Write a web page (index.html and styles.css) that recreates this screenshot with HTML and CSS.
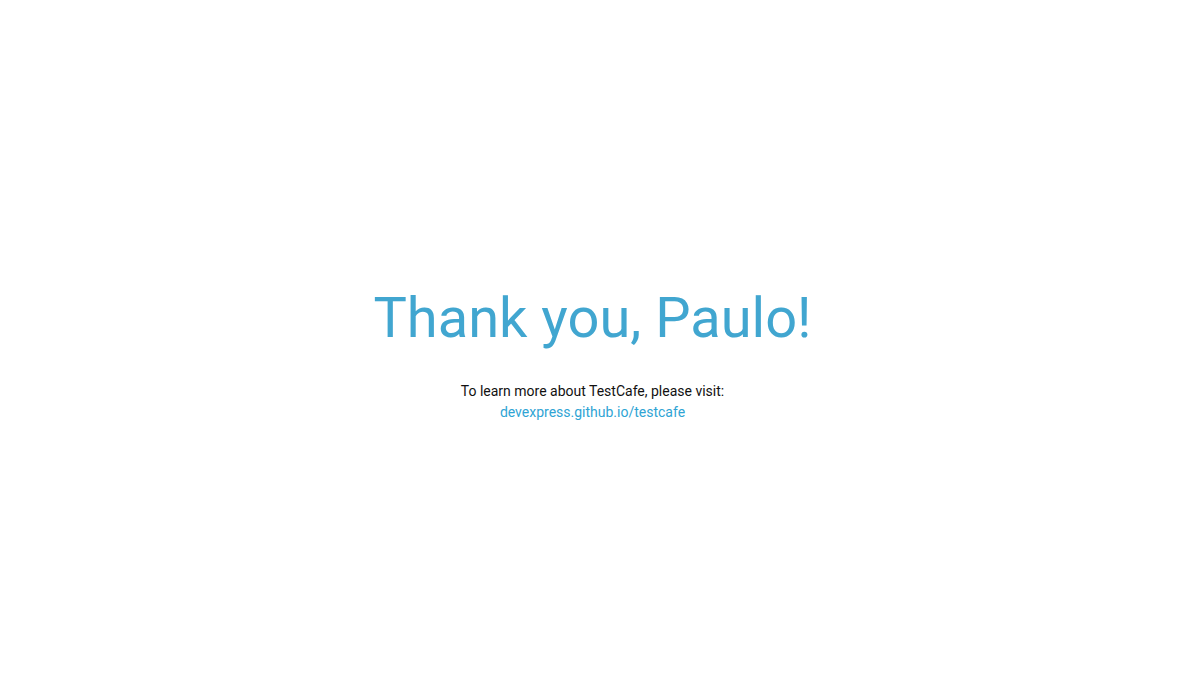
FILE: index.html
```html
<!DOCTYPE html>
<html>
<head>
<meta charset="utf-8">
<link rel="stylesheet" href="styles.css">
</head>
<body>
<main class="page">
  <div class="content">
    <h1 class="title">Thank you, Paulo!</h1>
    <p class="info">To learn more about TestCafe, please visit:<br><a class="link" href="#">devexpress.github.io/testcafe</a></p>
  </div>
</main>
</body>
</html>
```
FILE: styles.css
```css
html, body {
  margin: 0;
  padding: 0;
  height: 100%;
  background: #ffffff;
}
.page {
  box-sizing: border-box;
  height: 100%;
  padding-top: 19px;
  display: flex;
  align-items: center;
  justify-content: center;
  font-family: Roboto, "Liberation Sans", sans-serif;
}
.content {
  text-align: center;
}
.title {
  margin: 0;
  font-size: 56px;
  font-weight: 400;
  line-height: 1.2;
  color: #41a6d0;
}
.info {
  margin: 29px 0 0;
  font-size: 14px;
  line-height: 21px;
  color: #111111;
}
.link {
  color: #2fa4d4;
  text-decoration: none;
}
```
